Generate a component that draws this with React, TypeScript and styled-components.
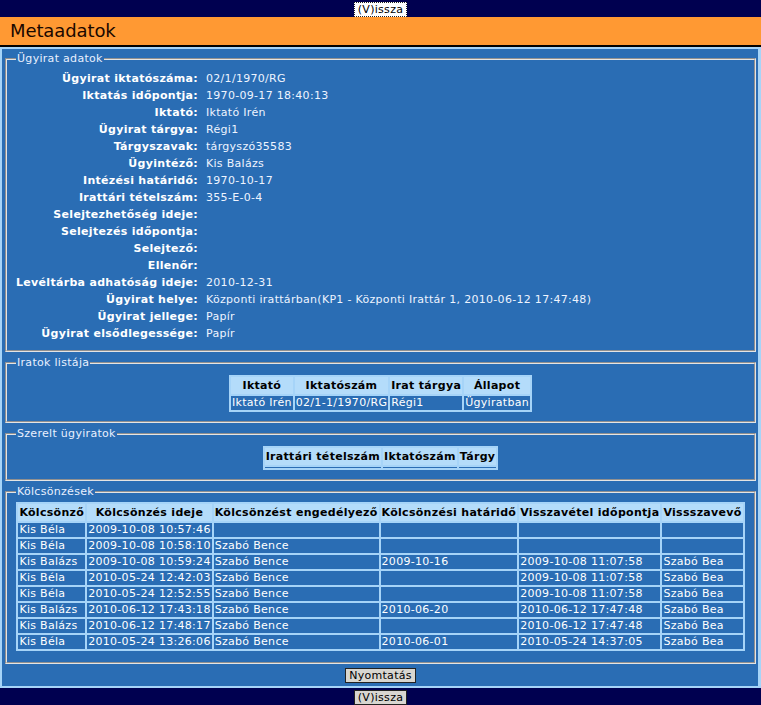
import styled, { createGlobalStyle } from "styled-components";

const GlobalStyle = createGlobalStyle`
  html, body {
    margin: 0;
    padding: 0;
    background: #000050;
  }
  body {
    font-family: "DejaVu Sans", Verdana, sans-serif;
    font-size: 11px;
    letter-spacing: 0.3px;
  }
`;

const Bar = styled.div`
  height: 17px;
  background: #000050;
  display: flex;
  justify-content: center;
  align-items: flex-start;
  padding-top: 2px;
  box-sizing: border-box;
`;

const PlainButton = styled.button<{ $focused?: boolean }>`
  font-family: "DejaVu Sans", Verdana, sans-serif;
  font-size: 11px;
  letter-spacing: 0.3px;
  line-height: 13px;
  height: 15px;
  padding: 0 3px;
  margin: 0;
  color: #000;
  background: ${(p) => (p.$focused ? "#ffffff" : "#d8d6d0")};
  border: 1px ${(p) => (p.$focused ? "dotted" : "solid")} #222;
  border-radius: 0;
  cursor: pointer;
`;

const Header = styled.div`
  height: 28px;
  background: #ff9933;
  border-bottom: 2px solid #000;
`;

const Title = styled.h1`
  margin: 0;
  padding-left: 10px;
  font-size: 18px;
  font-weight: normal;
  letter-spacing: -0.1px;
  line-height: 28px;
  color: #1a0800;
`;

const Main = styled.div`
  height: 641px;
  box-sizing: border-box;
  background: #2a6db4;
  border: 2px solid #a6d4f8;
  border-right-width: 3px;
  padding: 3px 2px 0 3px;
  display: flex;
  flex-direction: column;
  gap: 4px;
`;

const Fieldset = styled.fieldset<{ $top?: number; $bottom?: number }>`
  margin: 0;
  border: 2px groove #e4e4e4;
  padding: ${(p) => p.$top ?? 5}px 8px ${(p) => p.$bottom ?? 8}px;
  min-width: 0;
`;

const Legend = styled.legend`
  color: #e8f0ff;
  padding: 0 1px;
  margin-left: 1px;
  line-height: 13px;
`;

const InfoGrid = styled.div`
  display: grid;
  grid-template-columns: 183px auto;
  column-gap: 8px;
  justify-content: start;
  line-height: 17px;
`;

const Label = styled.div`
  text-align: right;
  font-weight: bold;
  color: #ffffff;
  white-space: nowrap;
`;

const Value = styled.div`
  color: #eef4ff;
  white-space: nowrap;
`;

const Table = styled.table`
  margin: 0 auto;
  border-collapse: separate;
  border-spacing: 2px;
  background: #a6d4f8;
`;

const Th = styled.th`
  background: #b4dcfa;
  color: #000;
  font-weight: bold;
  padding: 1px 1px;
  line-height: 15px;
  white-space: nowrap;
  text-align: center;
`;

const Td = styled.td<{ $empty?: boolean }>`
  background: #2a6db4;
  color: #ffffff;
  padding: 0 1px;
  height: ${(p) => (p.$empty ? "1px" : "14px")};
  line-height: ${(p) => (p.$empty ? "1px" : "14px")};
  white-space: nowrap;
  text-align: left;
`;

const Actions = styled.div`
  display: flex;
  justify-content: center;
`;

const info: [string, string][] = [
  ["Ügyirat iktatószáma:", "02/1/1970/RG"],
  ["Iktatás időpontja:", "1970-09-17 18:40:13"],
  ["Iktató:", "Iktató Irén"],
  ["Ügyirat tárgya:", "Régi1"],
  ["Tárgyszavak:", "tárgyszó35583"],
  ["Ügyintéző:", "Kis Balázs"],
  ["Intézési határidő:", "1970-10-17"],
  ["Irattári tételszám:", "355-E-0-4"],
  ["Selejtezhetőség ideje:", ""],
  ["Selejtezés időpontja:", ""],
  ["Selejtező:", ""],
  ["Ellenőr:", ""],
  ["Levéltárba adhatóság ideje:", "2010-12-31"],
  ["Ügyirat helye:", "Központi irattárban(KP1 - Központi Irattár 1, 2010-06-12 17:47:48)"],
  ["Ügyirat jellege:", "Papír"],
  ["Ügyirat elsődlegessége:", "Papír"],
];

const loans = [
  ["Kis Béla", "2009-10-08 10:57:46", "", "", "", ""],
  ["Kis Béla", "2009-10-08 10:58:10", "Szabó Bence", "", "", ""],
  ["Kis Balázs", "2009-10-08 10:59:24", "Szabó Bence", "2009-10-16", "2009-10-08 11:07:58", "Szabó Bea"],
  ["Kis Béla", "2010-05-24 12:42:03", "Szabó Bence", "", "2009-10-08 11:07:58", "Szabó Bea"],
  ["Kis Béla", "2010-05-24 12:52:55", "Szabó Bence", "", "2009-10-08 11:07:58", "Szabó Bea"],
  ["Kis Balázs", "2010-06-12 17:43:18", "Szabó Bence", "2010-06-20", "2010-06-12 17:47:48", "Szabó Bea"],
  ["Kis Balázs", "2010-06-12 17:48:17", "Szabó Bence", "", "2010-06-12 17:47:48", "Szabó Bea"],
  ["Kis Béla", "2010-05-24 13:26:06", "Szabó Bence", "2010-06-01", "2010-05-24 14:37:05", "Szabó Bea"],
];

const loanHeads = [
  "Kölcsönző",
  "Kölcsönzés ideje",
  "Kölcsönzést engedélyező",
  "Kölcsönzési határidő",
  "Visszavétel időpontja",
  "Vissszavevő",
];

export default function App() {
  return (
    <>
      <GlobalStyle />
      <Bar>
        <PlainButton $focused>(V)issza</PlainButton>
      </Bar>
      <Header>
        <Title>Metaadatok</Title>
      </Header>
      <Main>
        <Fieldset $bottom={8}>
          <Legend>Ügyirat adatok</Legend>
          <InfoGrid>
            {info.map(([l, v]) => (
              <>
                <Label key={l}>{l}</Label>
                <Value key={l + "v"}>{v}</Value>
              </>
            ))}
          </InfoGrid>
        </Fieldset>

        <Fieldset $top={6} $bottom={9}>
          <Legend>Iratok listája</Legend>
          <Table>
            <thead>
              <tr>
                <Th>Iktató</Th>
                <Th>Iktatószám</Th>
                <Th>Irat tárgya</Th>
                <Th>Állapot</Th>
              </tr>
            </thead>
            <tbody>
              <tr>
                <Td>Iktató Irén</Td>
                <Td>02/1-1/1970/RG</Td>
                <Td>Régi1</Td>
                <Td>Ügyiratban</Td>
              </tr>
            </tbody>
          </Table>
        </Fieldset>

        <Fieldset $top={6} $bottom={9}>
          <Legend>Szerelt ügyiratok</Legend>
          <Table>
            <thead>
              <tr>
                <Th>Irattári tételszám</Th>
                <Th>Iktatószám</Th>
                <Th>Tárgy</Th>
              </tr>
            </thead>
            <tbody>
              <tr>
                <Td $empty />
                <Td $empty />
                <Td $empty />
              </tr>
            </tbody>
          </Table>
        </Fieldset>

        <Fieldset $top={4} $bottom={11}>
          <Legend>Kölcsönzések</Legend>
          <Table>
            <thead>
              <tr>
                {loanHeads.map((h) => (
                  <Th key={h}>{h}</Th>
                ))}
              </tr>
            </thead>
            <tbody>
              {loans.map((row, i) => (
                <tr key={i}>
                  {row.map((c, j) => (
                    <Td key={j}>{c}</Td>
                  ))}
                </tr>
              ))}
            </tbody>
          </Table>
        </Fieldset>

        <Actions>
          <PlainButton>Nyomtatás</PlainButton>
        </Actions>
      </Main>
      <Bar>
        <PlainButton>(V)issza</PlainButton>
      </Bar>
    </>
  );
}
